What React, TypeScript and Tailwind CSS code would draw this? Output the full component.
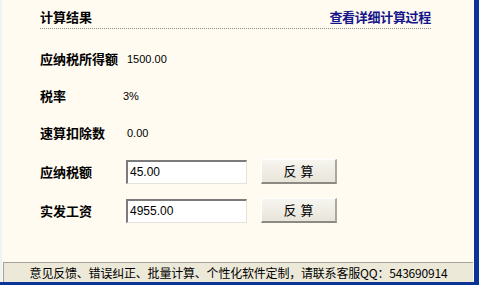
import React from 'react';

const cjk = { fontFamily: '"Noto Sans CJK SC", "Liberation Sans", sans-serif' };
const latin = { fontFamily: '"Liberation Sans", "Noto Sans CJK SC", sans-serif' };

const infoRows = [
  { label: '应纳税所得额', value: '1500.00', shift: 'ml-[1px]' },
  { label: '税率', value: '3%', shift: 'ml-[-3px]' },
  { label: '速算扣除数', value: '0.00', shift: 'ml-[1px]' },
];

const inputRows = [
  { label: '应纳税额', value: '45.00', gap: 'mt-[8px]' },
  { label: '实发工资', value: '4955.00', gap: 'mt-[14px]' },
];

const App = () => {
  return (
    <div className="w-[479px] h-[285px] bg-[#0b3494] pr-[5px] pb-[3px] overflow-hidden">
      <div className="h-full flex flex-col bg-[#fffbf0] border-l-2 border-[#eef4f2]">
        <div className="ml-[38px] w-[391px] h-[29px] flex items-center justify-between border-b border-dotted border-[#8a8a8a] pt-[5px]" style={cjk}>
          <span className="text-[13px] font-bold text-black">计算结果</span>
          <span className="text-[13px] font-bold text-[#16168c] tracking-[-0.3px]">查看详细计算过程</span>
        </div>

        <div className="mt-[11px] ml-[38px] flex flex-col">
          {infoRows.map((row, idx) => (
            <div key={idx} className="h-[37px] flex items-center">
              <span className="w-[86px] text-[13px] font-bold text-black" style={cjk}>
                {row.label}
              </span>
              <span className={`text-[11px] text-black pt-[2px] ${row.shift}`} style={latin}>
                {row.value}
              </span>
            </div>
          ))}

          {inputRows.map((row, idx) => (
            <div key={idx} className={`h-[25px] flex items-center ${row.gap}`}>
              <span className="w-[86px] text-[13px] font-bold text-black" style={cjk}>
                {row.label}
              </span>
              <div
                className="w-[121px] h-[24px] flex items-center bg-white border-t-2 border-l-2 border-t-[#7b7b7b] border-l-[#7b7b7b] border-b border-r border-b-[#e4e2da] border-r-[#e4e2da] pl-[2px] text-[12px] text-black"
                style={latin}
              >
                {row.value}
              </div>
              <button
                className="ml-[14px] w-[76px] h-[25px] flex items-center justify-center bg-gradient-to-b from-[#f6f5ef] to-[#e8e5da] border-t border-l border-t-white border-l-white border-b-2 border-r-2 border-b-[#8c8a82] border-r-[#a9a79e] text-[13px] text-black tracking-[4px] pl-[4px]"
                style={cjk}
              >
                反算
              </button>
            </div>
          ))}
        </div>

        <div className="flex-1" />

        <div className="h-[20px] mx-[1px] flex items-center justify-center bg-[#ece9d8] border-t border-l border-[#a5a39a] text-[12px] text-black tracking-[-0.2px]" style={cjk}>
          意见反馈、错误纠正、批量计算、个性化软件定制，请联系客服QQ：543690914
        </div>
      </div>
    </div>
  );
};

export default App;
